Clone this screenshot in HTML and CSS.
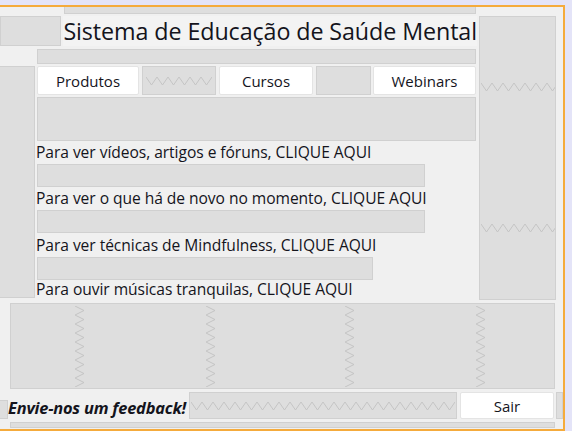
FILE: index.html
```html
<!DOCTYPE html>
<html lang="pt">
<head>
<meta charset="utf-8">
<title>Sistema de Educação de Saúde Mental</title>
<link rel="stylesheet" href="styles.css">
</head>
<body>
<svg class="defs" width="0" height="0" aria-hidden="true">
  <defs>
    <pattern id="zh" width="11" height="10" patternUnits="userSpaceOnUse">
      <path d="M0,1 L5.5,9 L11,1" fill="none" stroke="#c4c4c4" stroke-width="1"/>
    </pattern>
    <pattern id="zv" width="11" height="9" patternUnits="userSpaceOnUse">
      <path d="M1,0 L10,4.5 L1,9" fill="none" stroke="#c4c4c4" stroke-width="1"/>
    </pattern>
  </defs>
</svg>
<div class="strip"></div>
<div class="wrap">
  <div class="frame">
    <div class="main">
      <div class="leftpart">
        <div class="sp topsp"></div>
        <div class="titlerow">
          <div class="sp tbox"></div>
          <div class="title">Sistema de Educação de Saúde Mental</div>
        </div>
        <div class="sp row2"></div>
        <div class="body">
          <div class="sp lbox"></div>
          <div class="content">
            <div class="nav">
              <div class="btn b-prod">Produtos</div>
              <div class="sp nsp1"><svg width="66" height="10"><rect width="66" height="10" fill="url(#zh)"/></svg></div>
              <div class="btn b-cur">Cursos</div>
              <div class="sp nsp2"></div>
              <div class="btn b-web">Webinars</div>
            </div>
            <div class="sp bigbox"></div>
            <div class="label l1">Para ver vídeos, artigos e fóruns, CLIQUE AQUI</div>
            <div class="sp box w388"></div>
            <div class="label l2">Para ver o que há de novo no momento, CLIQUE AQUI</div>
            <div class="sp box w388"></div>
            <div class="label l3">Para ver técnicas de Mindfulness, CLIQUE AQUI</div>
            <div class="sp box w336"></div>
            <div class="label l4">Para ouvir músicas tranquilas, CLIQUE AQUI</div>
          </div>
        </div>
      </div>
      <div class="sp rcol">
        <svg class="rz1" width="74" height="10"><rect width="74" height="10" fill="url(#zh)"/></svg>
        <svg class="rz2" width="74" height="10"><rect width="74" height="10" fill="url(#zh)"/></svg>
      </div>
    </div>
    <div class="sp bottombox">
      <svg class="vz" width="11" height="81"><rect width="11" height="81" fill="url(#zv)"/></svg>
      <svg class="vz" width="11" height="81"><rect width="11" height="81" fill="url(#zv)"/></svg>
      <svg class="vz" width="11" height="81"><rect width="11" height="81" fill="url(#zv)"/></svg>
      <svg class="vz" width="11" height="81"><rect width="11" height="81" fill="url(#zv)"/></svg>
    </div>
    <div class="brow">
      <div class="sp bsmall"></div>
      <div class="feedback">Envie-nos um feedback!</div>
      <div class="sp bsp"><svg width="264" height="10"><rect width="264" height="10" fill="url(#zh)"/></svg></div>
      <div class="btn b-sair">Sair</div>
      <div class="sp bsmall2"></div>
    </div>
    <div class="sp thin"></div>
  </div>
  <div class="side"></div>
</div>
</body>
</html>
```
FILE: styles.css
```css
* { box-sizing: border-box; }
html, body { margin: 0; padding: 0; }
body {
  width: 572px;
  height: 436px;
  overflow: hidden;
  background: #ffffff;
  font-family: "Open Sans", "Noto Sans", sans-serif;
  color: #14141c;
}
.defs { position: absolute; width: 0; height: 0; }
.strip { height: 5px; background: #e4e4f8; }
.wrap { display: flex; }
.side { flex: 1; background: #e4e4f8; }
.frame {
  width: 565px;
  height: 426px;
  background: #f0f0f0;
  border-top: 2px solid #f5ab3c;
  border-right: 2px solid #f5ab3c;
  border-bottom: 2px solid #f5ab3c;
  padding-bottom: 1px;
  display: flex;
  flex-direction: column;
}
.sp {
  background: #dedede;
  border: 1px solid #d0d0d0;
}
.main { display: flex; align-items: flex-start; height: 293px; }
.leftpart { width: 477px; display: flex; flex-direction: column; }
.topsp { margin-left: 64px; width: 412px; height: 7px; border-top: none; }
.titlerow { margin-top: 2px; height: 30px; display: flex; }
.tbox { width: 62px; height: 30px; }
.title {
  margin-left: 2px;
  flex: 1;
  font-size: 23.3px;
  line-height: 30px;
  background: #f3f3f3;
  white-space: nowrap;
  letter-spacing: -0.1px;
}
.row2 { margin-top: 3px; margin-left: 37px; width: 439px; height: 15px; }
.body { margin-top: 2px; display: flex; align-items: flex-start; }
.lbox { width: 35px; height: 232px; border-left: none; }
.content { margin-left: 2px; width: 439px; display: flex; flex-direction: column; }
.nav { height: 29px; display: flex; }
.btn {
  background: #ffffff;
  border: 1px solid #e4e4e4;
  border-radius: 2px;
  display: flex;
  align-items: center;
  justify-content: center;
  font-size: 15px;
}
.b-prod { width: 102px; }
.nsp1 { margin-left: 3px; width: 74px; display: flex; align-items: center; justify-content: center; }
.b-cur { margin-left: 3px; width: 94px; }
.nsp2 { margin-left: 3px; width: 55px; }
.b-web { margin-left: 2px; width: 103px; }
.bigbox { margin-top: 2px; height: 44px; }
.label {
  font-size: 15.6px;
  white-space: nowrap;
  margin-left: -1px;
  display: flex;
  align-items: flex-end;
  letter-spacing: -0.05px;
}
.l1 { height: 23px; padding-bottom: 1px; }
.l2 { height: 23px; padding-bottom: 1px; }
.l3 { height: 24px; padding-bottom: 1px; }
.l4 { height: 20px; padding-bottom: 0; }
.box { height: 23px; }
.w388 { width: 388px; }
.w336 { width: 336px; }
.rcol {
  margin-left: 2px;
  margin-top: 9px;
  width: 77px;
  height: 284px;
  display: flex;
  flex-direction: column;
  align-items: center;
}
.rz1 { margin-top: 65px; }
.rz2 { margin-top: 131px; }
.bottombox {
  margin-top: 3px;
  margin-left: 10px;
  width: 545px;
  height: 86px;
  display: flex;
  align-items: center;
  padding-left: 63px;
}
.vz + .vz { margin-left: 120px; }
.vz:nth-child(3) { margin-left: 128px; }
.brow { margin-top: 3px; height: 27px; display: flex; align-items: flex-end; }
.bsmall { width: 8px; height: 19px; border-left: none; }
.feedback {
  width: 181px;
  height: 27px;
  font-weight: bold;
  font-style: italic;
  font-size: 16.4px;
  display: flex;
  align-items: flex-end;
  padding-bottom: 0;
  white-space: nowrap;
  letter-spacing: -0.2px;
  overflow: visible;
}
.bsp { width: 268px; height: 27px; display: flex; align-items: center; justify-content: center; }
.b-sair { margin-left: 3px; width: 94px; height: 27px; }
.bsmall2 { margin-left: 2px; width: 7px; height: 27px; }
.thin { margin-top: 3px; margin-left: 10px; width: 545px; height: 6px; }
```
